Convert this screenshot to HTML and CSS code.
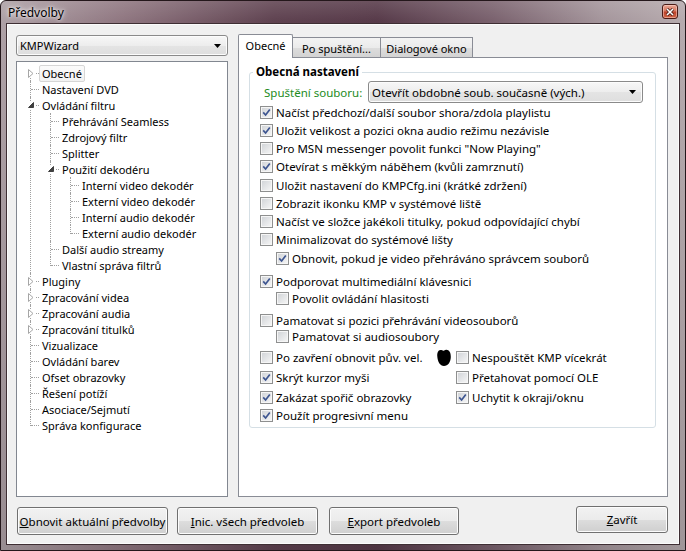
FILE: index.html
```html
<!DOCTYPE html>
<html lang="cs">
  <head>
    <meta charset="UTF-8" />
    <title>Předvolby</title>
    <link rel="stylesheet" href="styles.css">
  </head>
  <body>
    <div class="window">
      <!-- Title bar -->
      <div class="titlebar">
        <span class="title">Předvolby</span>
        <span class="close">
          <svg width="8" height="8" viewBox="0 0 8 8"><path d="M1 1L7 7M7 1L1 7" stroke="#3a1510" stroke-width="3"/><path d="M1 1L7 7M7 1L1 7" stroke="#fff" stroke-width="1.6"/></svg>
        </span>
      </div>

      <div class="client">
        <div class="main">
          <!-- Left: profile combo + category tree -->
          <div class="side">
            <div class="combo combo-side">
              <span>KMPWizard</span>
              <svg class="drop" width="7" height="4" viewBox="0 0 7 4"><path d="M0 0H7L3.5 4Z"/></svg>
            </div>
            <ul class="tree">
              <li>
                <div class="node"><span class="exp"><svg width="6" height="9" viewBox="0 0 6 9"><path d="M0.5 0.5L5 4.5L0.5 8.5Z" fill="#fff" stroke="#a6a6a6"/></svg></span><span class="label sel">Obecné</span></div>
              </li>
              <li><div class="node"><span class="label">Nastavení DVD</span></div></li>
              <li>
                <div class="node"><span class="exp"><svg width="6" height="6" viewBox="0 0 6 6"><path d="M5.5 0.5V5.5H0.5Z" fill="#404040" stroke="#404040"/></svg></span><span class="label">Ovládání filtru</span></div>
                <ul>
                  <li><div class="node"><span class="label">Přehrávání Seamless</span></div></li>
                  <li><div class="node"><span class="label">Zdrojový filtr</span></div></li>
                  <li><div class="node"><span class="label">Splitter</span></div></li>
                  <li>
                    <div class="node"><span class="exp"><svg width="6" height="6" viewBox="0 0 6 6"><path d="M5.5 0.5V5.5H0.5Z" fill="#404040" stroke="#404040"/></svg></span><span class="label">Použití dekodéru</span></div>
                    <ul>
                      <li><div class="node"><span class="label">Interní video dekodér</span></div></li>
                      <li><div class="node"><span class="label">Externí video dekodér</span></div></li>
                      <li><div class="node"><span class="label">Interní audio dekodér</span></div></li>
                      <li><div class="node"><span class="label">Externí audio dekodér</span></div></li>
                    </ul>
                  </li>
                  <li><div class="node"><span class="label">Další audio streamy</span></div></li>
                  <li><div class="node"><span class="label">Vlastní správa filtrů</span></div></li>
                </ul>
              </li>
              <li><div class="node"><span class="exp"><svg width="6" height="9" viewBox="0 0 6 9"><path d="M0.5 0.5L5 4.5L0.5 8.5Z" fill="#fff" stroke="#a6a6a6"/></svg></span><span class="label">Pluginy</span></div></li>
              <li><div class="node"><span class="exp"><svg width="6" height="9" viewBox="0 0 6 9"><path d="M0.5 0.5L5 4.5L0.5 8.5Z" fill="#fff" stroke="#a6a6a6"/></svg></span><span class="label">Zpracování videa</span></div></li>
              <li><div class="node"><span class="exp"><svg width="6" height="9" viewBox="0 0 6 9"><path d="M0.5 0.5L5 4.5L0.5 8.5Z" fill="#fff" stroke="#a6a6a6"/></svg></span><span class="label">Zpracování audia</span></div></li>
              <li><div class="node"><span class="exp"><svg width="6" height="9" viewBox="0 0 6 9"><path d="M0.5 0.5L5 4.5L0.5 8.5Z" fill="#fff" stroke="#a6a6a6"/></svg></span><span class="label">Zpracování titulků</span></div></li>
              <li><div class="node"><span class="label">Vizualizace</span></div></li>
              <li><div class="node"><span class="label">Ovládání barev</span></div></li>
              <li><div class="node"><span class="label">Ofset obrazovky</span></div></li>
              <li><div class="node"><span class="label">Řešení potíží</span></div></li>
              <li><div class="node"><span class="label">Asociace/Sejmutí</span></div></li>
              <li><div class="node"><span class="label">Správa konfigurace</span></div></li>
            </ul>
          </div>

          <!-- Right: tab control -->
          <div class="tabbox">
            <div class="tabstrip">
              <div class="tab active tab1">Obecné</div>
              <div class="tab tab2">Po spuštění...</div>
              <div class="tab tab3">Dialogové okno</div>
            </div>
            <div class="panel">
              <fieldset class="group">
                <legend>Obecná nastavení</legend>
                <div class="open-row">
                  <span class="green">Spuštění souboru:</span>
                  <div class="combo combo-open">
                    <span>Otevřít obdobné soub. současně (vých.)</span>
                    <svg class="drop" width="7" height="4" viewBox="0 0 7 4"><path d="M0 0H7L3.5 4Z"/></svg>
                  </div>
                </div>
                <div class="cb"><span class="box on"></span>Načíst předchozí/další soubor shora/zdola playlistu</div>
                <div class="cb"><span class="box on"></span>Uložit velikost a pozici okna audio režimu nezávisle</div>
                <div class="cb"><span class="box"></span>Pro MSN messenger povolit funkci "Now Playing"</div>
                <div class="cb"><span class="box on"></span>Otevírat s měkkým náběhem (kvůli zamrznutí)</div>
                <div class="cb gap1"><span class="box"></span>Uložit nastavení do KMPCfg.ini (krátké zdržení)</div>
                <div class="cb"><span class="box"></span>Zobrazit ikonku KMP v systémové liště</div>
                <div class="cb"><span class="box"></span>Načíst ve složce jakékoli titulky, pokud odpovídající chybí</div>
                <div class="cb"><span class="box"></span>Minimalizovat do systémové lišty</div>
                <div class="cb sub gap1"><span class="box on"></span>Obnovit, pokud je video přehráváno správcem souborů</div>
                <div class="cb gap5"><span class="box on"></span>Podporovat multimediální klávesnici</div>
                <div class="cb sub up1"><span class="box"></span>Povolit ovládání hlasitosti</div>
                <div class="cb gap4"><span class="box"></span>Pamatovat si pozici přehrávání videosouborů</div>
                <div class="cb sub up2"><span class="box"></span>Pamatovat si audiosoubory</div>
                <div class="pair gap3">
                  <div class="cb"><span class="box"></span>Po zavření obnovit pův. vel.</div>
                  <div class="cb blobbed">
                    <svg class="blob" width="14" height="18" viewBox="0 0 14 18"><path d="M3.5 1C1 1 0 4 0.3 7.5C0.6 12.5 3 17 7 17C11 17 13.7 13 13.8 8C14 3.5 12 0.5 9 0.8C7.8 1 7.2 2 6.4 1.7C5.6 1.2 4.8 1 3.5 1Z" fill="#000"/></svg>
                    <span class="box"></span>Nespouštět KMP vícekrát
                  </div>
                </div>
                <div class="pair gap2">
                  <div class="cb"><span class="box on"></span>Skrýt kurzor myši</div>
                  <div class="cb"><span class="box"></span>Přetahovat pomocí OLE</div>
                </div>
                <div class="pair gap2">
                  <div class="cb"><span class="box on"></span>Zakázat spořič obrazovky</div>
                  <div class="cb"><span class="box on"></span>Uchytit k okraji/oknu</div>
                </div>
                <div class="cb"><span class="box on"></span>Použít progresivní menu</div>
              </fieldset>
            </div>
          </div>
        </div>

        <!-- Bottom buttons -->
        <div class="buttons">
          <button class="btn btn-reset"><u>O</u>bnovit aktuální předvolby</button>
          <button class="btn btn-init"><u>I</u>nic. všech předvoleb</button>
          <button class="btn btn-export"><u>E</u>xport předvoleb</button>
          <button class="btn btn-close"><u>Z</u>avřít</button>
        </div>
      </div>
    </div>
  </body>
</html>
```

FILE: styles.css
```css
* {
  box-sizing: border-box;
}

body {
  margin: 0;
  font-family: "Noto Sans", sans-serif;
  font-size: 11px;
  color: #000;
}

/* Window frame */
.window {
  width: 686px;
  height: 551px;
  display: flex;
  flex-direction: column;
  padding: 0 5px 5px;
  border: 1px solid #24171b;
  border-radius: 6px 6px 0 0;
  background:
    linear-gradient(rgba(255, 255, 255, 0.12), rgba(255, 255, 255, 0) 20px, rgba(0, 0, 0, 0.12)),
    linear-gradient(90deg, #aea1a6 0%, #8f7680 18%, #5f4250 40%, #573a49 55%, #7a626e 72%, #a5969c 88%, #b6abae 100%);
}

.titlebar {
  height: 22px;
  display: flex;
  align-items: center;
  padding-left: 2px;
}

.title {
  font-size: 12px;
  text-shadow: 0 0 6px #fff, 0 0 3px rgba(255, 255, 255, 0.9);
}

.close {
  margin-left: auto;
  margin-right: 2px;
  align-self: flex-start;
  margin-top: 3px;
  width: 16px;
  height: 15px;
  border: 1px solid #4a1b16;
  border-radius: 3px;
  background: linear-gradient(#eaa898, #d7775f 45%, #bd432c 55%, #cf6446);
  box-shadow: inset 0 0 0 1px rgba(255, 220, 210, 0.5);
  display: flex;
  align-items: center;
  justify-content: center;
}

.client {
  flex: 1;
  display: flex;
  flex-direction: column;
  padding: 10px 11px 9px 9px;
  background: #f0f0f0;
  border: 1px solid #3e2e33;
  box-shadow: inset 0 0 0 1px #fbfbfb;
}

.main {
  flex: 1;
  display: flex;
  gap: 10px;
  min-height: 0;
}

/* Combo boxes */
.combo {
  height: 21px;
  display: flex;
  align-items: center;
  padding: 0 6px 0 3px;
  border: 1px solid #8a8a8a;
  border-radius: 3px;
  background: linear-gradient(#f7f7f7, #ededed 50%, #e4e4e4 51%, #dedede);
  box-shadow: inset 0 0 0 1px #fcfcfc;
  white-space: nowrap;
}

.combo .drop {
  margin-left: auto;
  fill: #000;
}

.combo-side {
  margin-top: 1px;
}

.combo-open {
  width: 275px;
  height: 22px;
  margin-left: auto;
  margin-right: 4px;
  font-size: 11.5px;
}

/* Tree */
.side {
  width: 212px;
  display: flex;
  flex-direction: column;
}

.tree {
  flex: 1;
  margin: 5px 0 0;
  padding: 3px 0 0;
  list-style: none;
  background: #fff;
  border: 1px solid #828790;
}

.tree ul {
  list-style: none;
  margin: 0;
  padding: 0 0 0 20px;
}

.tree li {
  position: relative;
}

.tree li::before {
  content: "";
  position: absolute;
  left: 14px;
  top: 8px;
  width: 8px;
  border-top: 1px dotted #a0a0a0;
}

.tree li::after {
  content: "";
  position: absolute;
  left: 13px;
  top: 0;
  bottom: 0;
  border-left: 1px dotted #a0a0a0;
}

.tree li:last-child::after {
  bottom: auto;
  height: 9px;
}

.tree > li:first-child::after {
  top: 8px;
}

.node {
  height: 16px;
  display: flex;
  align-items: center;
  padding-left: 22px;
  white-space: nowrap;
}

.exp {
  width: 9px;
  height: 9px;
  margin-left: -13px;
  margin-right: 4px;
  display: flex;
  align-items: center;
  justify-content: center;
  background: #fff;
  position: relative;
  z-index: 1;
}

.label {
  padding: 0 2px;
  line-height: 15px;
  border: 1px solid transparent;
}

.label.sel {
  border-color: #d6d6d6;
  border-radius: 2px;
  background: linear-gradient(#fbfbfb, #f2f2f2);
}

/* Tabs */
.tabbox {
  flex: 1;
  display: flex;
  flex-direction: column;
}

.tabstrip {
  height: 23px;
  display: flex;
  align-items: flex-end;
}

.tab {
  height: 20px;
  margin-left: -1px;
  padding-top: 1px;
  display: flex;
  align-items: center;
  justify-content: center;
  border: 1px solid #898c95;
  border-bottom: 0;
  background: linear-gradient(#f3f3f3, #ebebeb 50%, #dddddd 51%, #d3d3d3);
  white-space: nowrap;
}

.tab.active {
  height: 24px;
  margin-left: 0;
  margin-bottom: -1px;
  padding: 0 0 3px;
  background: #fff;
  border-radius: 2px 2px 0 0;
  position: relative;
  z-index: 1;
}

.tab1 { width: 55px; }
.tab2 { width: 89px; }
.tab3 { width: 93px; }

.panel {
  flex: 1;
  display: flex;
  flex-direction: column;
  padding: 0 11px 0 10px;
  background: #fff;
  border: 1px solid #898c95;
}

/* Group box */
.group {
  margin: 7px 0 0;
  padding: 2px 8px 3px 10px;
  min-width: 0;
  border: 1px solid #d5dfe5;
  border-radius: 3px;
}

.group legend {
  margin-left: -7px;
  padding: 0 3px;
  font-weight: bold;
  font-size: 11.5px;
  line-height: 14px;
}

.open-row {
  height: 22px;
  display: flex;
  align-items: center;
}

.green {
  color: #228b22;
  padding-left: 4px;
  font-size: 11.5px;
}

.cb {
  height: 18px;
  display: flex;
  align-items: center;
  white-space: nowrap;
  font-size: 11.5px;
}

.cb.sub { padding-left: 16px; }
.gap1 { margin-top: 1px; }
.gap2 { margin-top: 2px; }
.gap3 { margin-top: 3px; }
.gap4 { margin-top: 4px; }
.gap5 { margin-top: 5px; }
.up1 { margin-top: -1px; }
.up2 { margin-top: -2px; }

.pair {
  display: grid;
  grid-template-columns: 196px auto;
}

.blobbed {
  position: relative;
}

.blob {
  position: absolute;
  left: -19px;
  top: 1px;
}

/* Checkbox */
.box {
  width: 13px;
  height: 13px;
  margin-right: 3px;
  flex: none;
  border: 1px solid #8e8f8f;
  background: linear-gradient(135deg, #cfd2d6, #f7f7f7);
  box-shadow: inset 0 0 0 1px #f6f6f6;
}

.box.on {
  background:
    url("data:image/svg+xml,%3Csvg xmlns='http://www.w3.org/2000/svg' width='11' height='11'%3E%3Cpath d='M2.2 5.4L4.6 8L8.8 2.4' fill='none' stroke='%233d5590' stroke-width='1.7'/%3E%3C/svg%3E") center / 11px 11px no-repeat,
    linear-gradient(135deg, #cfd2d6, #f7f7f7);
}

/* Buttons */
.buttons {
  height: 29px;
  margin-top: 9px;
  display: flex;
  align-items: flex-start;
}

.btn {
  height: 28px;
  margin-top: 1px;
  padding: 0;
  font: inherit;
  font-size: 11.5px;
  color: #000;
  display: flex;
  align-items: center;
  justify-content: center;
  border: 1px solid #707070;
  border-radius: 3px;
  background: linear-gradient(#f2f2f2, #ebebeb 50%, #dddddd 51%, #cfcfcf);
  box-shadow: inset 0 0 0 1px #fcfcfc;
}

.btn-reset { width: 151px; margin-left: 1px; }
.btn-init { width: 141px; margin-left: 9px; }
.btn-export { width: 130px; margin-left: 11px; }
.btn-close { width: 92px; height: 27px; margin-top: 0; margin-left: auto; }
```
